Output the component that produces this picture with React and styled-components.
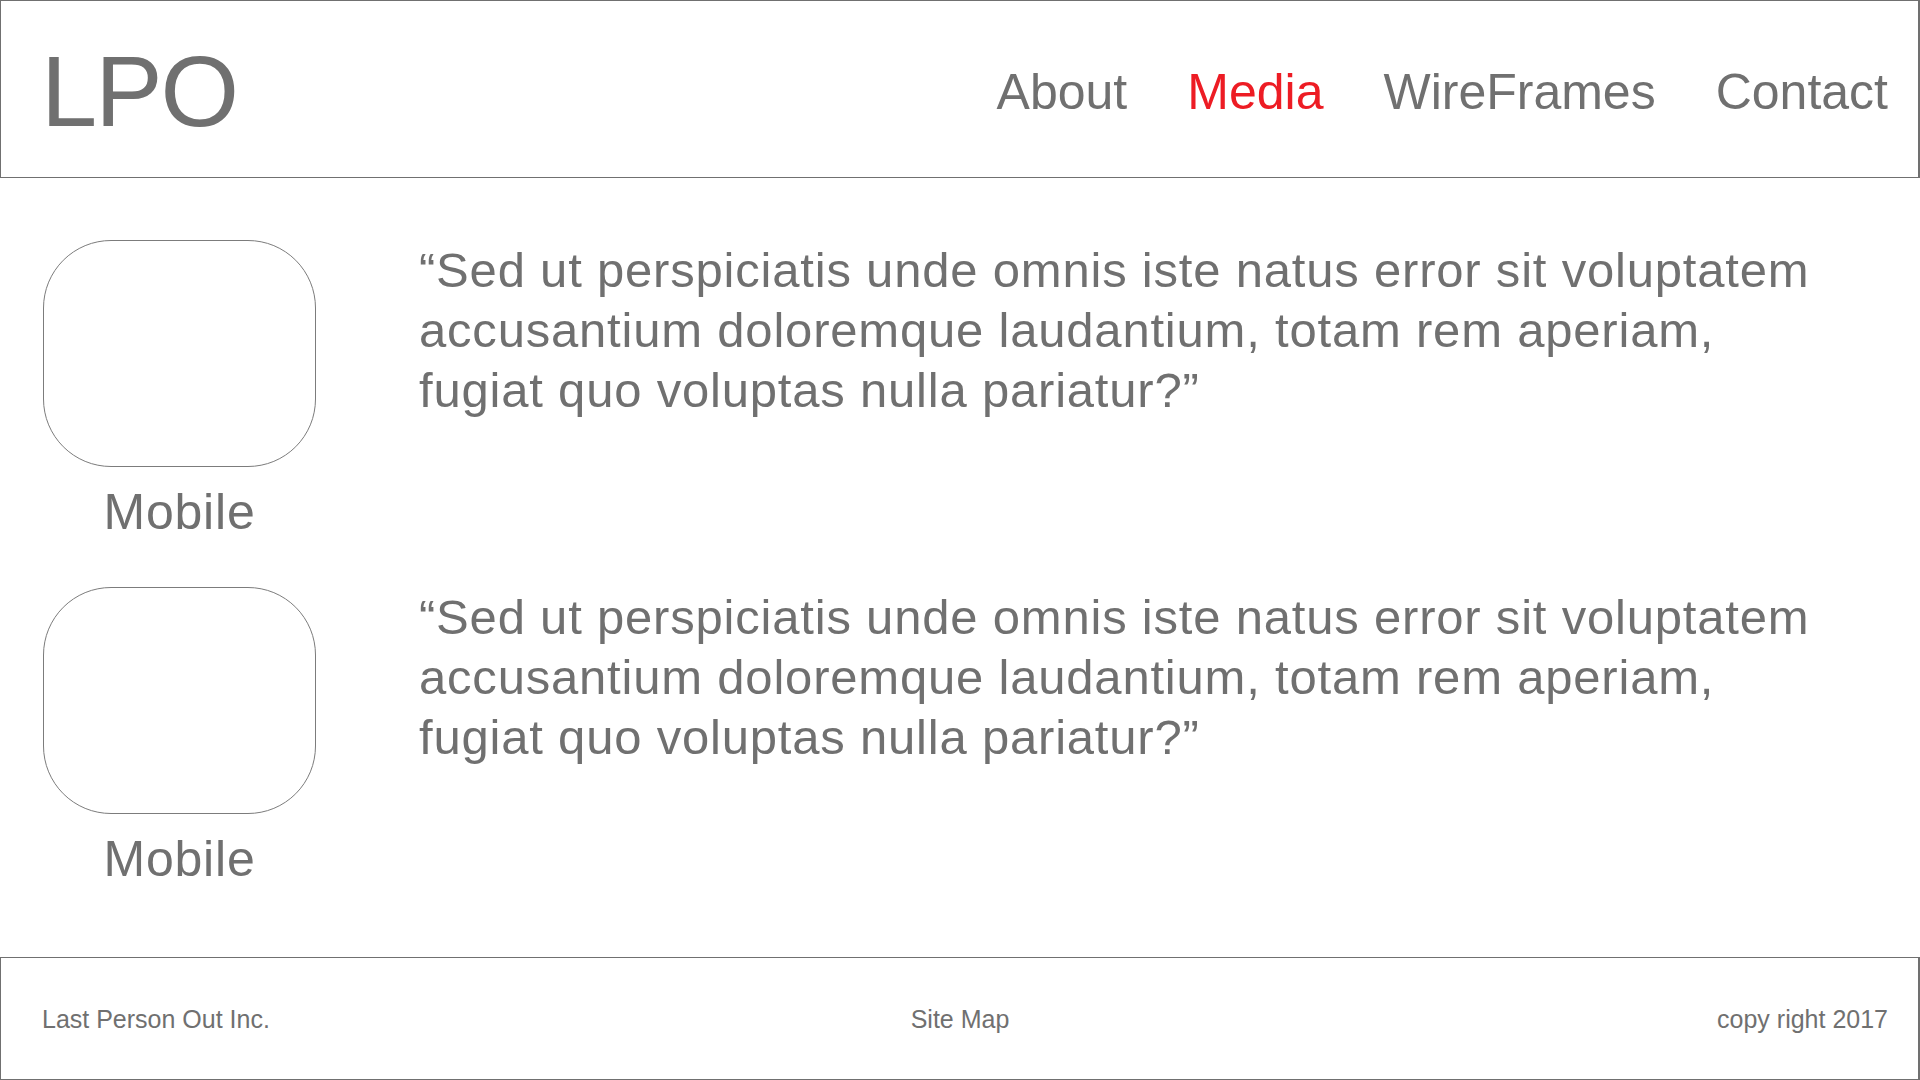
import React from 'react';
import styled, { createGlobalStyle } from 'styled-components';

const GlobalStyle = createGlobalStyle`
  * {
    box-sizing: border-box;
  }
  body {
    margin: 0;
    background: #fff;
    font-family: "Liberation Sans", Arial, sans-serif;
    color: #707070;
  }
`;

const Page = styled.div`
  display: flex;
  flex-direction: column;
  width: 1920px;
  height: 1080px;
`;

const Header = styled.header`
  display: flex;
  align-items: center;
  justify-content: space-between;
  height: 178px;
  padding: 4px 30px 0 40px;
  border: 1px solid #707070;
  border-right-width: 2px;
`;

const Logo = styled.div`
  font-size: 101px;
  line-height: 1;
  letter-spacing: -2px;
`;

const Nav = styled.nav`
  display: flex;
  gap: 60px;
  padding-top: 2px;
`;

const NavLink = styled.a`
  font-size: 50px;
  line-height: 1;
  color: ${(p) => (p.$active ? '#ed1c24' : '#707070')};
  text-decoration: none;
`;

const Main = styled.main`
  flex: 1;
  display: flex;
  flex-direction: column;
  gap: 50px;
  padding: 62px 30px 0 43px;
`;

const Row = styled.section`
  display: grid;
  grid-template-columns: 273px 1fr;
  column-gap: 103px;
  align-items: start;
`;

const Device = styled.figure`
  display: flex;
  flex-direction: column;
  align-items: center;
  margin: 0;
`;

const Frame = styled.div`
  width: 273px;
  height: 227px;
  border: 1px solid #7c7c7c;
  border-radius: 68px;
`;

const Caption = styled.figcaption`
  margin-top: 21px;
  font-size: 50px;
  line-height: 49px;
  letter-spacing: 0.8px;
`;

const Quote = styled.p`
  margin: 0;
  font-size: 49px;
  line-height: 60px;
  letter-spacing: 0.8px;
  white-space: nowrap;
`;

const Footer = styled.footer`
  display: grid;
  grid-template-columns: 1fr auto 1fr;
  align-items: center;
  height: 123px;
  padding: 2px 30px 0 41px;
  border: 1px solid #707070;
  border-right-width: 2px;
  font-size: 25px;
`;

const FootText = styled.span`
  justify-self: ${(p) => p.$align || 'start'};
  margin-right: ${(p) => (p.$align === 'center' ? '10px' : '0')};
`;

const quoteLines = [
  '“Sed ut perspiciatis unde omnis iste natus error sit voluptatem',
  'accusantium doloremque laudantium, totam rem aperiam,',
  'fugiat quo voluptas nulla pariatur?”',
];

const items = [1, 2];

export default function App() {
  return (
    <>
      <GlobalStyle />
      <Page>
        <Header>
          <Logo>LPO</Logo>
          <Nav>
            <NavLink>About</NavLink>
            <NavLink $active>Media</NavLink>
            <NavLink>WireFrames</NavLink>
            <NavLink>Contact</NavLink>
          </Nav>
        </Header>
        <Main>
          {items.map((i) => (
            <Row key={i}>
              <Device>
                <Frame />
                <Caption>Mobile</Caption>
              </Device>
              <Quote>
                {quoteLines.map((line, n) => (
                  <React.Fragment key={n}>
                    {line}
                    {n < quoteLines.length - 1 && <br />}
                  </React.Fragment>
                ))}
              </Quote>
            </Row>
          ))}
        </Main>
        <Footer>
          <FootText>Last Person Out Inc.</FootText>
          <FootText $align="center">Site Map</FootText>
          <FootText $align="end">copy right 2017</FootText>
        </Footer>
      </Page>
    </>
  );
}
